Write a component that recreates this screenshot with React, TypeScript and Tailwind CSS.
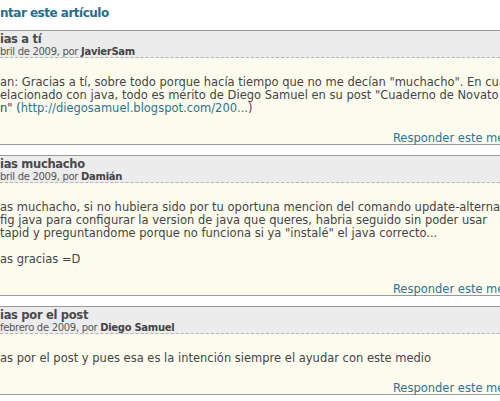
import React from "react";

const font = { fontFamily: '"DejaVu Sans", Verdana, sans-serif' };

function Comment({
  title,
  date,
  author,
  children,
}: {
  title: string;
  date: string;
  author: string;
  children: React.ReactNode;
}) {
  return (
    <div className="w-[540px] border-t border-b border-[#9a9a9a]">
      <div className="bg-[#ececec] h-[26px] border-b border-dashed border-[#b5b5b5] box-content">
        <div className="h-[14px] leading-[16px] text-[11.5px] tracking-[-0.3px] font-bold text-[#4a4a4a] whitespace-nowrap">
          {title}
        </div>
        <div className="h-[12px] leading-[13px] text-[10px] tracking-[-0.3px] text-[#555] whitespace-nowrap">
          {date}, por <span className="font-bold text-[#444]">{author}</span>
        </div>
      </div>
      <div className="bg-[#fcfcee] pt-[18px]">
        <div className="text-[11.5px] leading-[13px] text-[#444] whitespace-nowrap">
          {children}
        </div>
        <div className="mt-[15px] h-[14px] leading-[16px] text-[11.5px] text-[#2a7593] flex justify-end pr-[5px] whitespace-nowrap">
          Responder este mensaje
        </div>
      </div>
    </div>
  );
}

export default function App() {
  return (
    <div className="w-[500px] h-[401px] overflow-hidden bg-white" style={font}>
      <div className="h-[30px] pt-[5px]">
        <div className="text-[12px] leading-[16px] tracking-[-0.5px] font-bold text-[#236f90] whitespace-nowrap">
          ntar este artículo
        </div>
      </div>
      <div className="flex flex-col gap-[10px]">
        <Comment title="ias a tí" date="bril de 2009" author="JavierSam">
          an: Gracias a tí, sobre todo porque hacía tiempo que no me decían "muchacho". En cuanto a lo
          <br />
          elacionado con java, todo es mérito de Diego Samuel en su post "Cuaderno de Novato ...
          <br />
          n" (<span className="text-[#2a7593]">http://diegosamuel.blogspot.com/200...</span>)
        </Comment>
        <Comment title="ias muchacho" date="bril de 2009" author="Damián">
          as muchacho, si no hubiera sido por tu oportuna mencion del comando update-alternatives
          <br />
          fig java para configurar la version de java que queres, habria seguido sin poder usar
          <br />
          tapid y preguntandome porque no funciona si ya "instalé" el java correcto...
          <br />
          <br />
          as gracias =D
        </Comment>
        <Comment title="ias por el post" date="febrero de 2009" author="Diego Samuel">
          as por el post y pues esa es la intención siempre el ayudar con este medio
        </Comment>
      </div>
    </div>
  );
}
